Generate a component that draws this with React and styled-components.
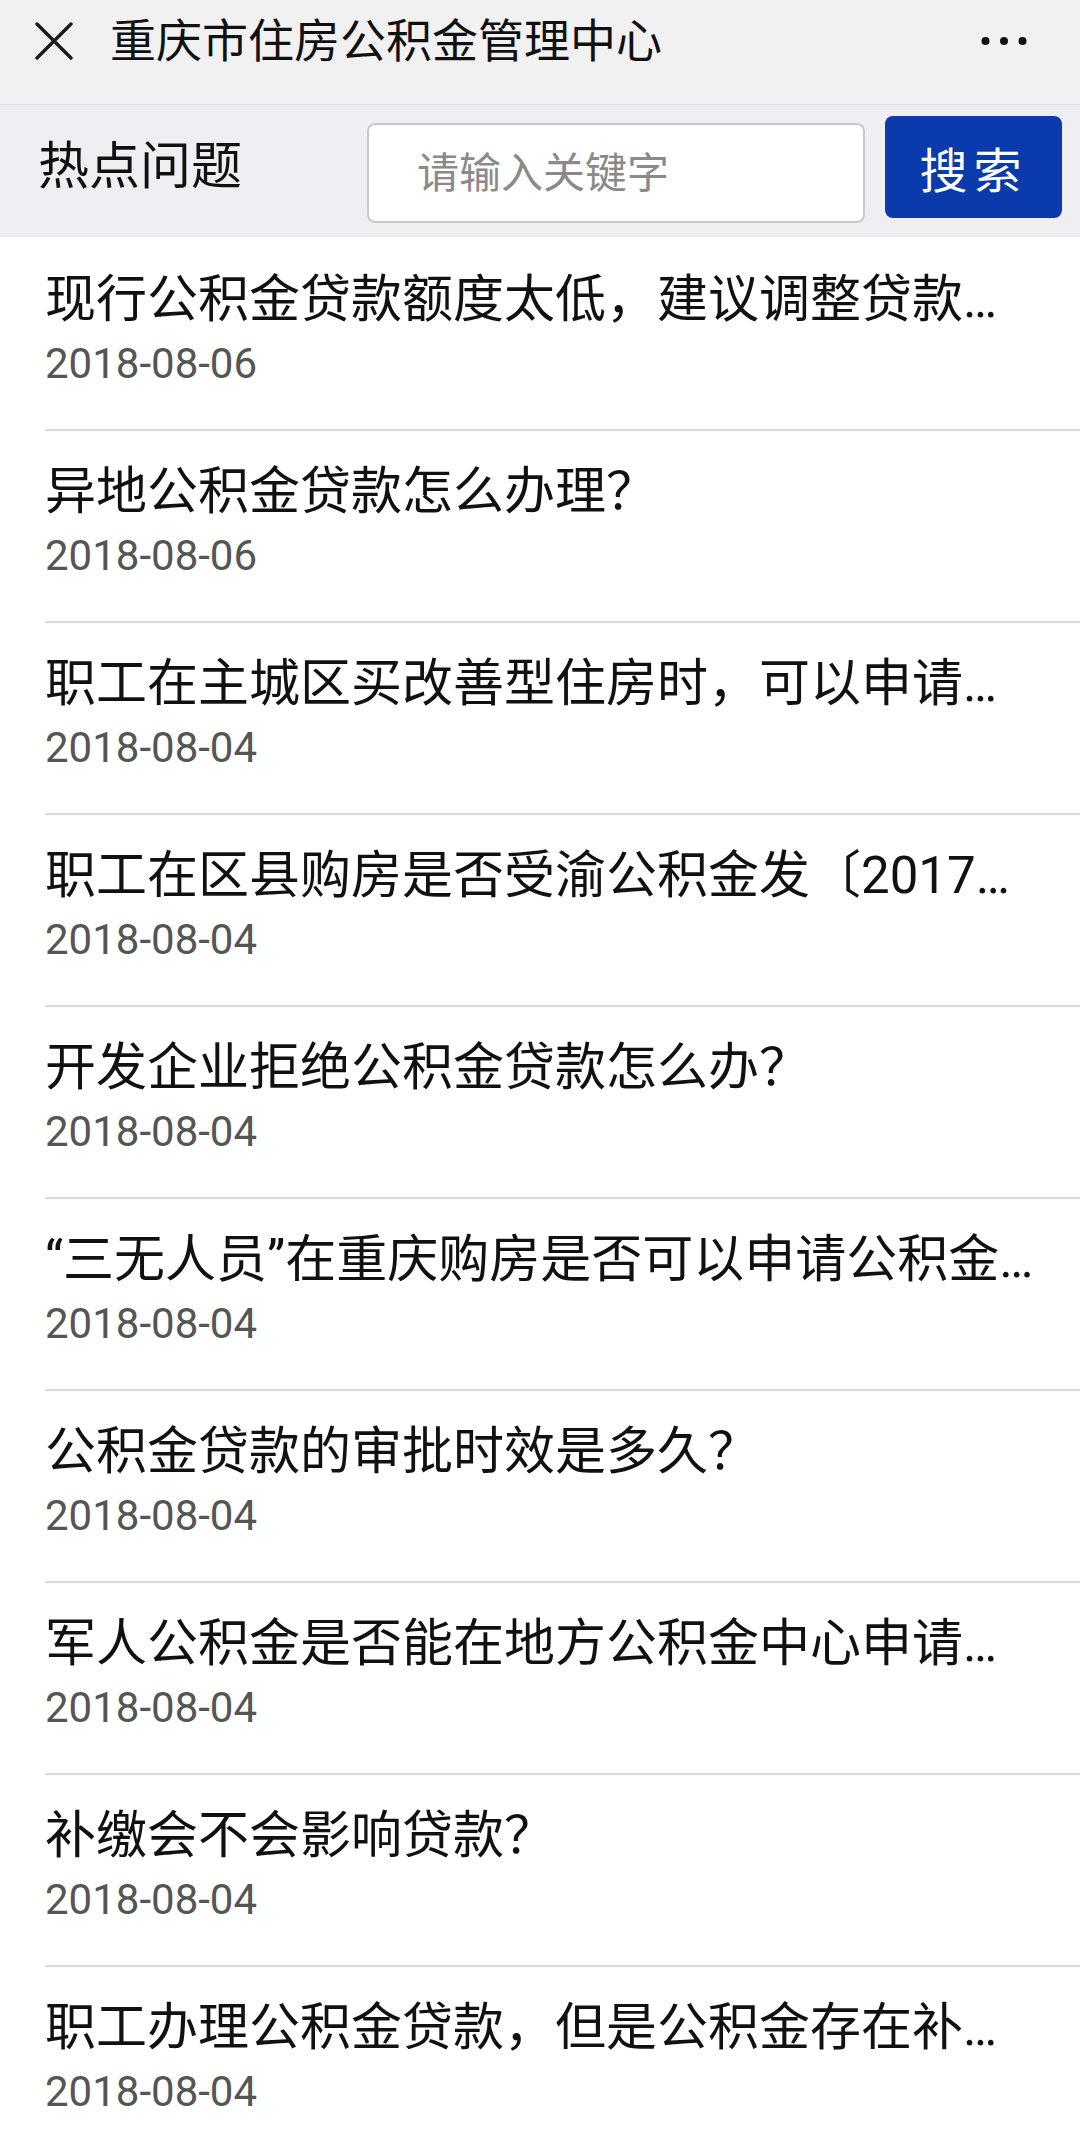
import styled, { createGlobalStyle } from "styled-components";

const GlobalStyle = createGlobalStyle`
  html, body {
    margin: 0;
    padding: 0;
    background: #ffffff;
  }
  body {
    font-family: Roboto, "Noto Sans CJK SC", sans-serif;
    color: #111111;
  }
  * {
    box-sizing: border-box;
  }
`;

const Page = styled.div`
  width: 1080px;
  height: 2140px;
  overflow: hidden;
  background: #ffffff;
`;

const TitleBar = styled.header`
  display: flex;
  align-items: center;
  height: 105px;
  padding: 0 53px 22px 35px;
  background: #f1f1f2;
  border-bottom: 1px solid #dfdfe3;
`;

const CloseIcon = styled.svg`
  width: 38px;
  height: 38px;
  flex: 0 0 auto;
`;

const Title = styled.h1`
  flex: 1;
  margin: 0 0 0 37px;
  font-family: Roboto, "Noto Sans CJK SC", sans-serif;
  font-size: 46px;
  font-weight: 400;
  line-height: 60px;
  color: #111111;
`;

const MoreIcon = styled.svg`
  width: 46px;
  height: 10px;
  flex: 0 0 auto;
`;

const SearchBar = styled.div`
  display: flex;
  align-items: center;
  height: 132px;
  padding: 0 18px 8px 38px;
  background: #efeff3;
`;

const Label = styled.div`
  flex: 0 0 329px;
  font-size: 51px;
  line-height: 60px;
  color: #111111;
`;

const SearchInput = styled.input`
  width: 498px;
  height: 100px;
  margin-top: 12px;
  padding: 0 20px 0 48px;
  border: 2px solid #c9c9cc;
  border-radius: 8px;
  background: #ffffff;
  font-family: Roboto, "Noto Sans CJK SC", sans-serif;
  font-size: 42px;
  color: #111111;
  outline: none;

  &::placeholder {
    color: #8a8a8a;
  }
`;

const SearchButton = styled.button`
  width: 177px;
  height: 102px;
  margin-left: 20px;
  padding: 0;
  border: none;
  border-radius: 8px;
  background: #0a3aab;
  color: #ffffff;
  font-family: Roboto, "Noto Sans CJK SC", sans-serif;
  font-size: 48px;
  letter-spacing: 6px;
  cursor: pointer;
`;

const List = styled.ul`
  list-style: none;
  margin: 0;
  padding: 2px 0 0 45px;
`;

const Item = styled.li`
  padding: 31px 40px 39px 0;
  border-bottom: 2px solid #dadada;
`;

const ItemTitle = styled.div`
  font-size: 51px;
  line-height: 60px;
  color: #111111;
  white-space: nowrap;
  overflow: hidden;
  text-overflow: ellipsis;
`;

const ItemDate = styled.div`
  margin-top: 8px;
  font-family: Roboto, sans-serif;
  font-size: 42px;
  line-height: 52px;
  color: #555555;
`;

const questions = [
  { title: "现行公积金贷款额度太低，建议调整贷款…", date: "2018-08-06" },
  { title: "异地公积金贷款怎么办理？", date: "2018-08-06" },
  { title: "职工在主城区买改善型住房时，可以申请…", date: "2018-08-04" },
  { title: "职工在区县购房是否受渝公积金发〔2017…", date: "2018-08-04" },
  { title: "开发企业拒绝公积金贷款怎么办？", date: "2018-08-04" },
  { title: "“三无人员”在重庆购房是否可以申请公积金…", date: "2018-08-04" },
  { title: "公积金贷款的审批时效是多久？", date: "2018-08-04" },
  { title: "军人公积金是否能在地方公积金中心申请…", date: "2018-08-04" },
  { title: "补缴会不会影响贷款？", date: "2018-08-04" },
  { title: "职工办理公积金贷款，但是公积金存在补…", date: "2018-08-04" },
];

const App = () => {
  return (
    <Page>
      <GlobalStyle />
      <TitleBar>
        <CloseIcon viewBox="0 0 38 38">
          <path
            d="M2 2 L36 36 M36 2 L2 36"
            stroke="#1a1a1a"
            strokeWidth="3.4"
            strokeLinecap="round"
            fill="none"
          />
        </CloseIcon>
        <Title>重庆市住房公积金管理中心</Title>
        <MoreIcon viewBox="0 0 46 10">
          <circle cx="4.5" cy="5" r="4" fill="#111" />
          <circle cx="23" cy="5" r="4" fill="#111" />
          <circle cx="41.5" cy="5" r="4" fill="#111" />
        </MoreIcon>
      </TitleBar>
      <SearchBar>
        <Label>热点问题</Label>
        <SearchInput placeholder="请输入关键字" />
        <SearchButton>搜索</SearchButton>
      </SearchBar>
      <List>
        {questions.map((q, i) => (
          <Item key={i}>
            <ItemTitle>{q.title}</ItemTitle>
            <ItemDate>{q.date}</ItemDate>
          </Item>
        ))}
      </List>
    </Page>
  );
};

export default App;
